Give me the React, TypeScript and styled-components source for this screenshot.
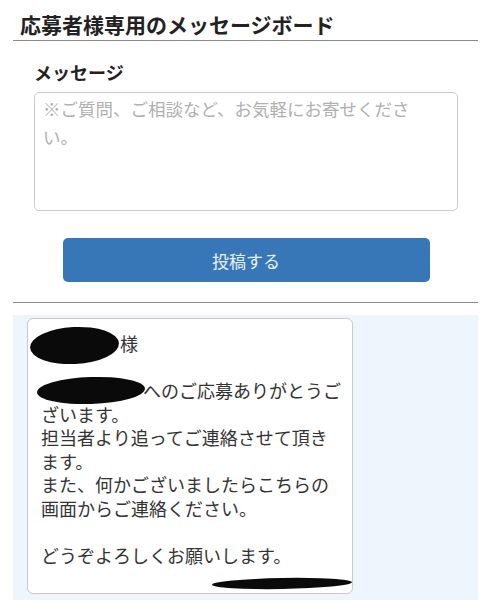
import React from "react";
import styled, { createGlobalStyle } from "styled-components";

const GlobalStyle = createGlobalStyle`
  * {
    box-sizing: border-box;
  }
  body {
    margin: 0;
    background: #ffffff;
    font-family: "Noto Sans CJK JP", "Noto Sans", sans-serif;
    color: #333333;
  }
`;

const Page = styled.div`
  padding: 0 14px 0 13px;
`;

const BoardTitle = styled.h1`
  margin: 0;
  padding: 10px 0 2px 7px;
  font-size: 21px;
  font-weight: 700;
  line-height: 28px;
  color: #222222;
  border-bottom: 1px solid #8a8a8a;
`;

const Form = styled.form`
  display: flex;
  flex-direction: column;
  padding: 19px 20px 0 21px;
`;

const Label = styled.label`
  font-size: 18px;
  font-weight: 700;
  line-height: 24px;
  color: #222222;
  margin-bottom: 8px;
`;

const MessageInput = styled.textarea`
  display: block;
  width: 100%;
  height: 119px;
  margin: 0;
  padding: 2px 36px 0 8px;
  border: 1px solid #cccccc;
  border-radius: 5px;
  resize: none;
  font-family: "Noto Sans CJK JP", "Noto Sans", sans-serif;
  font-size: 17.5px;
  line-height: 28px;
  color: #333333;
  background: #ffffff;
  outline: none;

  &::placeholder {
    color: #b0b0b0;
  }
`;

const SubmitButton = styled.button`
  align-self: center;
  width: 367px;
  height: 44px;
  margin: 27px 0 20px 0;
  border: none;
  border-radius: 5px;
  background: #3777b7;
  color: #e9f0f7;
  font-family: "Noto Sans CJK JP", "Noto Sans", sans-serif;
  font-size: 17px;
  cursor: pointer;
`;

const Divider = styled.hr`
  margin: 0;
  border: none;
  border-top: 1px solid #8a8a8a;
`;

const Thread = styled.section`
  margin-top: 12px;
  padding: 3px 0 6px 14px;
  background: #eef5fd;
`;

const Card = styled.article`
  width: 326px;
  padding: 13px 9px 2px 13px;
  border: 1px solid #c9c9c9;
  border-radius: 6px;
  background: #ffffff;
`;

const MessageBody = styled.div`
  font-size: 18px;
  line-height: 23.5px;
  color: #333333;
  white-space: pre-wrap;
`;

const Signature = styled.div`
  text-align: right;
  line-height: 23.5px;
  height: 23.5px;
  margin-right: -3px;
`;

type RedactedProps = {
  $w: number;
  $l: number;
  $t: number;
  $bw: number;
  $bh: number;
  $rot: number;
};

// black marker over names
const Redacted = styled.span<RedactedProps>`
  position: relative;
  display: inline-block;
  width: ${(p) => p.$w}px;
  height: 18px;
  vertical-align: -3px;

  &::after {
    content: "";
    position: absolute;
    left: ${(p) => p.$l}px;
    top: ${(p) => p.$t}px;
    width: ${(p) => p.$bw}px;
    height: ${(p) => p.$bh}px;
    border-radius: 50%;
    background: #0a0a0a;
    transform: rotate(${(p) => p.$rot}deg);
  }
`;

const App = () => {
  return (
    <>
      <GlobalStyle />
      <Page>
        <BoardTitle>応募者様専用のメッセージボード</BoardTitle>
        <Form onSubmit={(e) => e.preventDefault()}>
          <Label htmlFor="message">メッセージ</Label>
          <MessageInput
            id="message"
            placeholder="※ご質問、ご相談など、お気軽にお寄せください。"
          />
          <SubmitButton type="submit">投稿する</SubmitButton>
        </Form>
        <Divider />
        <Thread>
          <Card>
            <MessageBody>
              <Redacted $w={79} $l={-11} $t={-9} $bw={89} $bh={37} $rot={-3} />
              様{"\n\n"}
              <Redacted $w={102} $l={-4} $t={-6} $bw={108} $bh={27} $rot={-2} />
              へのご応募ありがとうございます。{"\n"}
              担当者より追ってご連絡させて頂きます。{"\n"}
              また、何かございましたらこちらの画面からご連絡ください。{"\n\n"}
              どうぞよろしくお願いします。
            </MessageBody>
            <Signature>
              <Redacted $w={134} $l={0} $t={8} $bw={140} $bh={11} $rot={-1} />
            </Signature>
          </Card>
        </Thread>
      </Page>
    </>
  );
};

export default App;
